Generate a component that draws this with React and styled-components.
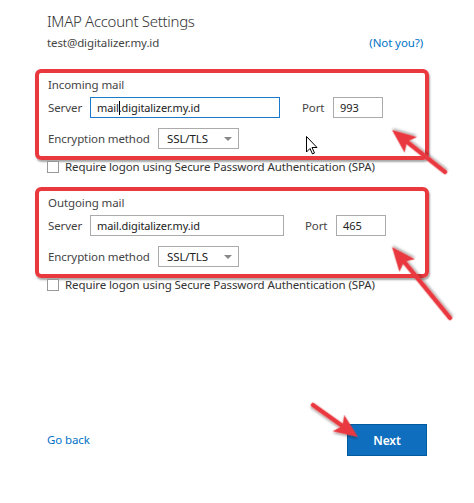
import React from 'react';
import styled, { createGlobalStyle } from 'styled-components';

const GlobalStyle = createGlobalStyle`
  body {
    margin: 0;
    background: #ffffff;
    font-family: "Noto Sans", "Open Sans", sans-serif;
    color: #333;
  }
`;

const sections = [
  { title: 'Incoming mail', port: '993', serverWidth: 190, portGap: 22, focused: true },
  { title: 'Outgoing mail', port: '465', serverWidth: 194, portGap: 21, focused: false },
];

const arrows = [
  { from: [445, 172], to: [392, 130] },
  { from: [450, 318], to: [392, 247] },
  { from: [313, 405], to: [358, 437] },
];

const App = () => {
  return (
    <Page>
      <GlobalStyle />
      <Header>
        <Title>IMAP Account Settings</Title>
        <AccountRow>
          <Email>test@digitalizer.my.id</Email>
          <Link>(Not you?)</Link>
        </AccountRow>
      </Header>

      {sections.map((s, i) => (
        <React.Fragment key={s.title}>
          <Section $first={i === 0}>
            <Legend>{s.title}</Legend>
            <Row>
              <Label $w={42}>Server</Label>
              <Field $w={s.serverWidth} $focused={s.focused}>
                {s.focused ? (
                  <>
                    mail<Caret />.digitalizer.my.id
                  </>
                ) : (
                  'mail.digitalizer.my.id'
                )}
              </Field>
              <Label $w={31} $ml={s.portGap}>Port</Label>
              <Field $w={50}>{s.port}</Field>
            </Row>
            <Row $mt={10}>
              <Label $w={110}>Encryption method</Label>
              <Select>
                SSL/TLS
                <SelectArrow />
              </Select>
            </Row>
          </Section>
          <CheckRow>
            <CheckBox />
            <CheckText>Require logon using Secure Password Authentication (SPA)</CheckText>
          </CheckRow>
        </React.Fragment>
      ))}

      <Footer>
        <BackLink>Go back</BackLink>
        <NextButton>Next</NextButton>
      </Footer>

      <Overlay width="474" height="503" viewBox="0 0 474 503">
        <defs>
          <filter id="shadow" x="-20%" y="-20%" width="140%" height="140%">
            <feDropShadow dx="1" dy="1.5" stdDeviation="1" floodColor="#000" floodOpacity="0.35" />
          </filter>
        </defs>
        {arrows.map((a, i) => {
          const dx = a.to[0] - a.from[0];
          const dy = a.to[1] - a.from[1];
          const len = Math.sqrt(dx * dx + dy * dy);
          const angle = (Math.atan2(dy, dx) * 180) / Math.PI;
          return (
            <g
              key={i}
              transform={`translate(${a.from[0]} ${a.from[1]}) rotate(${angle})`}
              filter="url(#shadow)"
            >
              <line x1="0" y1="0" x2={len - 16} y2="0" stroke="#e9393f" strokeWidth="4.5" strokeLinecap="round" />
              <path d={`M ${len} 0 L ${len - 24} -10 L ${len - 19} 0 L ${len - 24} 10 Z`} fill="#e9393f" />
            </g>
          );
        })}
        <path
          d="M306.5 136.5 L306.5 152 L310 148.5 L312.5 154 L314.5 153 L312 147.5 L317 147.5 Z"
          fill="#ffffff"
          stroke="#000"
          strokeWidth="1"
          strokeLinejoin="round"
        />
      </Overlay>
    </Page>
  );
};

const Page = styled.div`
  position: relative;
  box-sizing: border-box;
  width: 474px;
  height: 503px;
  padding: 10px 45px 47px 35px;
  display: flex;
  flex-direction: column;
  overflow: hidden;
  font-size: 11.5px;
  letter-spacing: -0.1px;
`;

const Header = styled.div`
  padding-left: 12px;
  margin-bottom: 18px;
`;

const Title = styled.div`
  font-size: 15px;
  font-weight: 300;
  line-height: 22px;
  color: #333;
  letter-spacing: -0.3px;
`;

const AccountRow = styled.div`
  display: flex;
  justify-content: space-between;
  align-items: center;
  margin-top: 3px;
  padding-right: 6px;
  line-height: 16px;
`;

const Email = styled.span`
  color: #444;
`;

const Link = styled.span`
  color: #0072c6;
`;

const Section = styled.div`
  border: 4px solid #e9393f;
  border-radius: 6px;
  padding: 4px 8px 7px 9px;
  margin-top: ${p => (p.$first ? '0' : '12px')};
  box-shadow: 1px 2px 2px rgba(0, 0, 0, 0.35);
`;

const Legend = styled.div`
  line-height: 16px;
  color: #444;
`;

const Row = styled.div`
  display: flex;
  align-items: center;
  margin-top: ${p => (p.$mt ? `${p.$mt}px` : '4px')};
`;

const Label = styled.span`
  width: ${p => p.$w}px;
  margin-left: ${p => (p.$ml ? `${p.$ml}px` : '0')};
  flex-shrink: 0;
  line-height: 16px;
  color: #444;
`;

const Field = styled.div`
  box-sizing: border-box;
  width: ${p => p.$w}px;
  height: 21px;
  padding: 0 6px;
  border: 1px solid ${p => (p.$focused ? '#1979ca' : '#ababab')};
  font-size: 11px;
  line-height: 19px;
  color: #222;
  white-space: nowrap;
  overflow: hidden;
`;

const Caret = styled.span`
  display: inline-block;
  width: 1px;
  height: 14px;
  background: #000;
  vertical-align: -3px;
  margin: 0 -1px 0 0;
`;

const Select = styled.div`
  position: relative;
  box-sizing: border-box;
  width: 81px;
  height: 21px;
  padding-left: 8px;
  border: 1px solid #ababab;
  line-height: 19px;
  color: #222;
`;

const SelectArrow = styled.span`
  position: absolute;
  right: 6px;
  top: 8px;
  width: 0;
  height: 0;
  border-left: 4px solid transparent;
  border-right: 4px solid transparent;
  border-top: 4px solid #888;
`;

const CheckRow = styled.div`
  display: flex;
  align-items: center;
  margin-top: -1px;
  padding-left: 12px;
  height: 16px;
`;

const CheckBox = styled.span`
  box-sizing: border-box;
  width: 12px;
  height: 12px;
  border: 1px solid #999;
  background: #fff;
  margin-right: 6px;
`;

const CheckText = styled.span`
  line-height: 16px;
  color: #333;
  white-space: nowrap;
`;

const Footer = styled.div`
  margin-top: auto;
  display: flex;
  justify-content: space-between;
  align-items: center;
  padding-left: 12px;
  padding-right: 2px;
`;

const BackLink = styled.span`
  line-height: 16px;
  color: #0072c6;
`;

const NextButton = styled.div`
  box-sizing: border-box;
  width: 80px;
  height: 32px;
  background: #106ebe;
  border: 1px solid #005a9e;
  color: #fff;
  font-size: 12px;
  font-weight: 600;
  display: flex;
  align-items: center;
  justify-content: center;
`;

const Overlay = styled.svg`
  position: absolute;
  left: 0;
  top: 0;
  pointer-events: none;
`;

export default App;
